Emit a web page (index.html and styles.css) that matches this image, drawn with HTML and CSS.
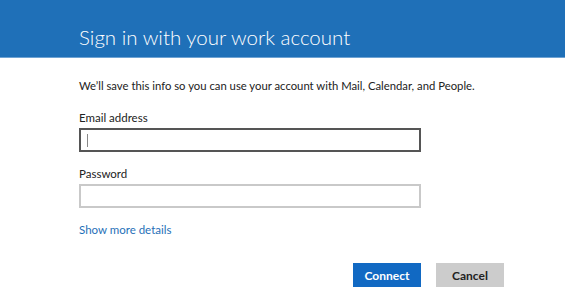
FILE: index.html
```html
<!DOCTYPE html>
<html lang="en">

<head>
    <meta charset="UTF-8">
    <title>Sign in with your work account</title>
    <link rel="stylesheet" href="styles.css">
</head>

<body>

    <div class="header">
        <h1>Sign in with your work account</h1>
    </div>

    <div class="content">
        <p class="intro">We’ll save this info so you can use your account with Mail, Calendar, and People.</p>

        <label class="field-label" for="email">Email address</label>
        <div class="field field-focus">
            <span class="caret"></span>
        </div>

        <label class="field-label" for="password">Password</label>
        <div class="field"></div>

        <a class="more-link" href="#">Show more details</a>

        <div class="actions">
            <button class="btn btn-primary">Connect</button>
            <button class="btn btn-secondary">Cancel</button>
        </div>
    </div>

</body>

</html>
```

FILE: styles.css
```css
body {
    margin: 0;
    font-family: 'Lato', sans-serif;
    background-color: #fff;
    color: #222;
}

/* Blue title bar */
.header {
    background-color: #1f70b8;
    height: 58px;
    border-bottom: 1px solid #6fa3d3;
    padding-left: 79px;
    box-sizing: border-box;
}

.header h1 {
    margin: 0;
    padding-top: 22px;
    font-size: 20.5px;
    font-weight: 300;
    color: #fff;
    line-height: 30px;
}

.content {
    padding: 19px 0 0 79px;
    width: 425px;
}

.intro {
    margin: 0 0 14px;
    font-size: 11.3px;
    line-height: 18px;
    white-space: nowrap;
}

.field-label {
    display: block;
    font-size: 11.5px;
    line-height: 18px;
    margin-bottom: 1px;
}

.field {
    width: 342px;
    height: 24px;
    border: 2px solid #c9c9c9;
    box-sizing: border-box;
    margin-bottom: 13px;
    display: flex;
    align-items: center;
    padding-left: 6px;
}

.field-focus {
    border-color: #555;
}

.caret {
    width: 1px;
    height: 13px;
    background-color: #888;
}

.more-link {
    display: block;
    font-size: 11.5px;
    line-height: 18px;
    color: #1f70b8;
    text-decoration: none;
}

.actions {
    display: flex;
    justify-content: flex-end;
    gap: 15px;
    margin-top: 24px;
}

.btn {
    width: 68px;
    height: 24px;
    border: none;
    font-family: 'Lato', sans-serif;
    font-size: 12px;
    font-weight: 700;
    padding: 0;
}

.btn-primary {
    background-color: #1169c3;
    color: #fff;
}

.btn-secondary {
    background-color: #cccccc;
    color: #222;
}
```
